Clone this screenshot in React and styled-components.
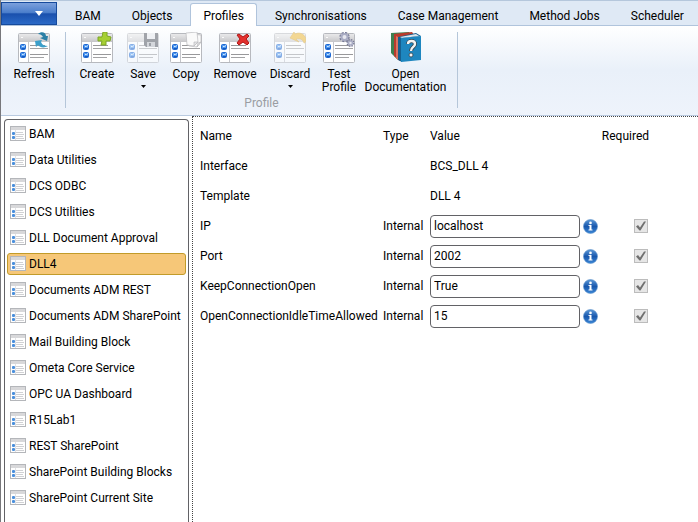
import React, { useState } from 'react'
import styled, { createGlobalStyle } from 'styled-components'

const GlobalStyle = createGlobalStyle`
  * {
    box-sizing: border-box;
  }

  body {
    margin: 0;
    background: #fff;
  }

  body, button, input {
    font-family: Roboto, "Open Sans", sans-serif;
    font-size: 12px;
    line-height: 16px;
    color: #000;
  }
`

const Window = styled.div`
  display: flex;
  flex-direction: column;
  min-height: 100vh;
  border-left: 1px solid #77777b;
  overflow: hidden;
`

const TabBar = styled.div`
  display: flex;
  align-items: flex-end;
  height: 26px;
  border-top: 1px solid #b5c7dc;
  background: linear-gradient(#b0c4dc, #b0c4dc) bottom / 100% 1px no-repeat #dfe9f5;
`

const AppButton = styled.button`
  display: flex;
  align-items: center;
  justify-content: flex-end;
  width: 56px;
  height: 23px;
  margin: 0 5px 1px 0;
  padding: 0 13px 0 0;
  flex-shrink: 0;
  border: 1px solid #164a9c;
  background: linear-gradient(#7ba0dc 0%, #4c7fcc 45%, #1a50ad 52%, #2b69c6 100%);
`

const Tabs = styled.div`
  display: flex;
  gap: 5px;
`

const Tab = styled.button`
  height: 23px;
  padding: 1px 12px 0;
  flex-shrink: 0;
  white-space: nowrap;
  border: 1px solid ${props => (props.$active ? '#b0c4dc' : 'transparent')};
  border-bottom: 0;
  border-radius: 3px 3px 0 0;
  background: ${props => (props.$active ? '#fff' : 'transparent')};
`

const Ribbon = styled.div`
  display: flex;
  height: 90px;
  padding: 6px 0 0 2px;
  border-bottom: 1px solid #b9cae0;
  background: linear-gradient(#fff 0%, #e9f0f9 50%, #eef3fb 100%);
`

const Group = styled.section`
  display: flex;
  flex-direction: column;
  justify-content: space-between;
  height: 76px;
  padding: 0 8px;
  border-right: 1px solid #b5c6d9;
`

const GroupButtons = styled.div`
  display: flex;
  align-items: flex-start;
`

const GroupLabel = styled.div`
  text-align: center;
  line-height: 10px;
  color: #9a9da3;
`

const RibbonButton = styled.button`
  display: flex;
  flex-direction: column;
  align-items: center;
  width: ${props => props.$width}px;
  padding: 0;
  border: 0;
  background: none;
  line-height: 13px;

  svg {
    display: block;
    flex-shrink: 0;
  }

  span {
    margin: 5px 0 4px;
  }
`

const Body = styled.div`
  display: flex;
  flex: 1;
`

const Sidebar = styled.nav`
  display: flex;
  width: 191px;
  padding: 3px 3px 0;
  flex-shrink: 0;
`

const ProfileList = styled.ul`
  flex: 1;
  min-width: 0;
  margin: 0;
  padding: 3px 2px;
  list-style: none;
  border: 1px solid #626266;
  border-bottom: 0;
  border-radius: 4px 4px 0 0;
`

const ProfileItem = styled.button`
  display: flex;
  align-items: center;
  gap: 3px;
  width: 100%;
  height: 22px;
  margin-bottom: 4px;
  padding: 0 2px;
  white-space: nowrap;
  border: 1px solid ${props => (props.$selected ? '#c29b29' : 'transparent')};
  border-radius: 3px;
  background: ${props => (props.$selected ? '#f6c778' : 'none')};

  svg {
    flex-shrink: 0;
  }
`

const Details = styled.main`
  flex: 1;
  padding: 4px 7px;
  border-top: 1px dotted #444;
  border-left: 1px dotted #444;
`

const Properties = styled.table`
  border-collapse: collapse;
  table-layout: fixed;
  width: 449px;

  th, td {
    height: 30px;
    padding: 0;
    font-weight: normal;
    text-align: left;
    white-space: nowrap;
  }
`

const Col = styled.col`
  width: ${props => props.$width}px;
`

const RequiredCell = styled.td`
  && {
    text-align: right;
  }
`

const ValueInput = styled.input`
  display: block;
  width: 150px;
  height: 23px;
  padding: 0 3px;
  border: 1px solid #626266;
  border-radius: 4px;
  background: #fff;
`

const InfoButton = styled.button`
  display: block;
  padding: 0;
  border: 0;
  background: none;

  svg {
    display: block;
  }
`

const CheckWrap = styled.span`
  display: grid;
  justify-content: end;
  padding-right: 1px;

  > * {
    grid-area: 1 / 1;
  }
`

const Check = styled.input`
  appearance: none;
  width: 14px;
  height: 14px;
  margin: 0;
  border: 1px solid #bcbcbc;
  background: #e6e6e6;
`

const RefreshMark = () => (
  <g>
    <path d="M20 1 C23 -2 28 -1 28 3 L30 3 L29 8 L22 5 L25 4 C24 2 22 1 20 1 Z" fill="#2a7fa6" />
    <path d="M17 8 L24 7 L23 9 C24 12 27 13 30 13 C27 15 22 15 20 12 L18 14 Z" fill="#3b9fca" />
  </g>
)

const CreateMark = () => (
  <path d="M22 -1 L26 -1 L26 3 L30 4 L29 8 L25 8 L25 12 L20 12 L21 8 L17 8 L17 4 L21 4 Z" fill="#a5cf33" stroke="#7da626" strokeWidth="1" />
)

const SaveMark = () => (
  <g>
    <path d="M17 0 H31 V14 H19 L17 12 Z" fill="#4a4e58" />
    <path d="M20 0 H28 V6 H20 Z" fill="#e5e7ec" />
    <path d="M20 9 H28 V14 H20 Z" fill="#b3b6bc" />
    <path d="M22 10 H24 V13 H22 Z" fill="#454952" />
  </g>
)

const CopyMark = () => (
  <g fill="#fafafa" stroke="#bababd" strokeWidth="0.7">
    <path d="M20 1 L31 2 L31 9 L27 14 L19 13 Z" />
    <path d="M16 0 L27 -1 L28 9 L24 13 L17 12 Z" />
    <path d="M28 9 L24 9 L24 13 Z" fill="#e4e4e6" />
    <path d="M31 9 L28 10 L27 14 Z" fill="#e4e4e6" />
  </g>
)

const RemoveMark = () => (
  <path d="M18 2 L20 1 L24 4 L28 1 L30 3 L27 6 L30 10 L28 12 L24 9 L20 12 L18 10 L21 6 Z" fill="#e2302d" stroke="#b01716" strokeWidth="1" />
)

const DiscardMark = () => (
  <path d="M16 5 L20 -1 L21 1 C27 -2 32 3 32 7 C32 9 31 10 30 10 C29 7 27 5 22 6 L25 9 Z" fill="#edb42a" stroke="#d09a20" strokeWidth="0.6" />
)

const GearsMark = () => (
  <g>
    <circle cx="21.5" cy="4" r="4.2" fill="none" stroke="#777a96" strokeWidth="2" strokeDasharray="2 1.3" />
    <circle cx="21.5" cy="4" r="3" fill="#e6e7ef" stroke="#a9acc4" strokeWidth="2" />
    <circle cx="27.5" cy="10" r="3.2" fill="none" stroke="#777a96" strokeWidth="1.6" strokeDasharray="1.5 1" />
    <circle cx="27.5" cy="10" r="2" fill="#e6e7ef" stroke="#a9acc4" strokeWidth="1.6" />
  </g>
)

const BlueBox = ({ y }) => (
  <g>
    <rect x="2.5" y={y + 0.5} width="5" height="5" rx="1" fill="#4c98f0" stroke="#1f68d2" />
    <path d={`M4 ${y + 2.5} H5.5 L7 ${y + 1.5}`} fill="none" stroke="#d5e8ff" />
    <path d={`M3.5 ${y + 4.5} H7`} stroke="#1659c0" />
  </g>
)

// the form drawing that all profile commands share, with the command's mark on top
const FormIcon = ({ faded, children }) => (
  <svg width="32" height="31" viewBox="0 -1 32 31" aria-hidden="true" opacity={faded ? 0.5 : 1}>
    <defs>
      <linearGradient id="formHead" x1="0" y1="0" x2="0" y2="1">
        <stop offset="0" stopColor="#e9e9ea" />
        <stop offset="1" stopColor="#c6c6c9" />
      </linearGradient>
    </defs>
    <rect x="0.5" y="0.5" width="31" height="29" rx="1" fill="#fff" stroke="#b7b9be" />
    <rect x="1" y="1" width="30" height="8" fill="url(#formHead)" />
    <path d="M3 4.5 H5" stroke="#fafafa" />
    <path d="M10.5 9 V29" stroke="#c4c5ca" />
    <BlueBox y={11} />
    <BlueBox y={19} />
    <path d="M12 12.5 H27 M12 21.5 H30" stroke="#98989a" />
    <path d="M12 15.5 H30 M12 24.5 H26" stroke="#a2a2a4" />
    {children}
  </svg>
)

const BooksIcon = () => (
  <svg width="32" height="31" viewBox="0 -1 32 31" aria-hidden="true">
    <path d="M1 0 L19 -1 L22 3 L8 5 L8 27 L1 20 Z" fill="#3e8050" />
    <path d="M4 1 L22 -1 L25 3 L10 5 L10 28 L4 23 Z" fill="#b93b2c" />
    <path d="M6 3 L8 4 V27 L6 25 Z" fill="#d87462" />
    <path d="M8 4 L26 0 L31 3 L12 5 L12 29 L8 27 Z" fill="#185f8e" />
    <path d="M10 4 L26 1 L29 3 L12 5 Z" fill="#dfe6ec" />
    <path d="M11 5 L31 3 V27 L11 29 Z" fill="#1e86bf" />
    <path d="M18 11 C18 7 25 7 25 11 C25 14 21 14 21 18" fill="none" stroke="#34434d" strokeWidth="4" />
    <path d="M18 11 C18 7 25 7 25 11 C25 14 21 14 21 18" fill="none" stroke="#f3f3f3" strokeWidth="2.4" />
    <circle cx="21" cy="22" r="2" fill="#f3f3f3" stroke="#34434d" strokeWidth="0.8" />
  </svg>
)

const SmallFormIcon = () => (
  <svg width="16" height="16" viewBox="0 0 16 16" aria-hidden="true">
    <rect x="0.5" y="0.5" width="15" height="14" fill="#fff" stroke="#b4b6ba" />
    <rect x="1" y="1" width="14" height="3" fill="#d8d8da" />
    <path d="M5.5 4 V14" stroke="#e2e3e6" />
    <rect x="2" y="6" width="3" height="3" rx="1" fill="#4a8fdc" />
    <rect x="2" y="10" width="3" height="3" rx="1" fill="#4a8fdc" />
    <path d="M6 6.5 H13 M6 8.5 H14 M6 10.5 H13 M6 12.5 H14" stroke="#d0d1d4" />
  </svg>
)

const InfoIcon = () => (
  <svg width="15" height="15" viewBox="0 0 15 15" aria-hidden="true">
    <defs>
      <linearGradient id="infoBlue" x1="0" y1="0" x2="0" y2="1">
        <stop offset="0" stopColor="#5b97d6" />
        <stop offset="0.5" stopColor="#1958ad" />
        <stop offset="1" stopColor="#3a86d6" />
      </linearGradient>
    </defs>
    <circle cx="7.5" cy="7.5" r="7" fill="url(#infoBlue)" stroke="#5f93cb" strokeWidth="0.6" />
    <circle cx="7.5" cy="3.9" r="1.3" fill="#fff" />
    <path d="M5.5 6 H8.5 V10.5 H9.5 V11.5 H5.5 V10.5 H6.5 V7 H5.5 Z" fill="#fff" />
  </svg>
)

const CheckMark = () => (
  <svg width="14" height="14" viewBox="0 0 14 14" aria-hidden="true">
    <path d="M2 7.5 L4 6 L6 8.5 L10 2.5 L12 2.5 L6.5 11.5 L5.5 11.5 Z" fill="#707070" />
  </svg>
)

const DownArrow = ({ width, height, fill }) => (
  <svg width={width} height={height} viewBox="0 0 8 5" preserveAspectRatio="none" aria-hidden="true">
    <path d="M0 0 H8 L4 5 Z" fill={fill} />
  </svg>
)

const tabs = ['BAM', 'Objects', 'Profiles', 'Synchronisations', 'Case Management', 'Method Jobs', 'Scheduler']

const commands = [
  { label: 'Create', width: 46, icon: <FormIcon><CreateMark /></FormIcon> },
  { label: 'Save', width: 46, menu: true, icon: <FormIcon faded><SaveMark /></FormIcon> },
  { label: 'Copy', width: 40, icon: <FormIcon><CopyMark /></FormIcon> },
  { label: 'Remove', width: 58, icon: <FormIcon><RemoveMark /></FormIcon> },
  { label: 'Discard', width: 52, menu: true, icon: <FormIcon faded><DiscardMark /></FormIcon> },
  { label: 'Test Profile', width: 46, icon: <FormIcon><GearsMark /></FormIcon> },
  { label: 'Open Documentation', width: 87, icon: <BooksIcon /> },
]

const profiles = [
  'BAM',
  'Data Utilities',
  'DCS ODBC',
  'DCS Utilities',
  'DLL Document Approval',
  'DLL4',
  'Documents ADM REST',
  'Documents ADM SharePoint',
  'Mail Building Block',
  'Ometa Core Service',
  'OPC UA Dashboard',
  'R15Lab1',
  'REST SharePoint',
  'SharePoint Building Blocks',
  'SharePoint Current Site',
]

const settings = [
  { name: 'IP', value: 'localhost' },
  { name: 'Port', value: '2002' },
  { name: 'KeepConnectionOpen', value: 'True' },
  { name: 'OpenConnectionIdleTimeAllowed', value: '15' },
]

const SettingRow = ({ name, value }) => (
  <tr>
    <td><label htmlFor={name}>{name}</label></td>
    <td>Internal</td>
    <td><ValueInput id={name} defaultValue={value} /></td>
    <td><InfoButton aria-label={'About ' + name}><InfoIcon /></InfoButton></td>
    <RequiredCell>
      <CheckWrap>
        <Check type="checkbox" checked disabled readOnly aria-label={name + ' required'} />
        <CheckMark />
      </CheckWrap>
    </RequiredCell>
  </tr>
)

const App = () => {
  const [tab, setTab] = useState('Profiles')
  const [profile, setProfile] = useState('DLL4')

  return (
    <Window>
      <GlobalStyle />
      <TabBar>
        <AppButton aria-label="Application menu">
          <DownArrow width={8} height={5} fill="#fff" />
        </AppButton>
        <Tabs role="tablist">
          {tabs.map(name => (
            <Tab key={name} role="tab" aria-selected={name === tab} $active={name === tab} onClick={() => setTab(name)}>
              {name}
            </Tab>
          ))}
        </Tabs>
      </TabBar>

      <Ribbon>
        <Group>
          <GroupButtons>
            <RibbonButton $width={46}>
              <FormIcon><RefreshMark /></FormIcon>
              <span>Refresh</span>
            </RibbonButton>
          </GroupButtons>
        </Group>
        <Group>
          <GroupButtons>
            {commands.map(({ label, width, icon, menu }) => (
              <RibbonButton key={label} $width={width}>
                {icon}
                <span>{label}</span>
                {menu && <DownArrow width={5} height={3} fill="#000" />}
              </RibbonButton>
            ))}
          </GroupButtons>
          <GroupLabel>Profile</GroupLabel>
        </Group>
      </Ribbon>

      <Body>
        <Sidebar aria-label="Profiles">
          <ProfileList>
            {profiles.map(name => (
              <li key={name}>
                <ProfileItem $selected={name === profile} onClick={() => setProfile(name)}>
                  <SmallFormIcon />
                  {name}
                </ProfileItem>
              </li>
            ))}
          </ProfileList>
        </Sidebar>
        <Details>
          <Properties>
            <colgroup>
              <Col $width={183} />
              <Col $width={47} />
              <Col $width={153} />
              <Col $width={17} />
              <Col $width={49} />
            </colgroup>
            <thead>
              <tr>
                <th>Name</th>
                <th>Type</th>
                <th colSpan={2}>Value</th>
                <RequiredCell as="th">Required</RequiredCell>
              </tr>
            </thead>
            <tbody>
              <tr>
                <td>Interface</td>
                <td />
                <td colSpan={3}>BCS_DLL 4</td>
              </tr>
              <tr>
                <td>Template</td>
                <td />
                <td colSpan={3}>DLL 4</td>
              </tr>
              {settings.map(row => <SettingRow key={row.name} {...row} />)}
            </tbody>
          </Properties>
        </Details>
      </Body>
    </Window>
  )
}

export default App
